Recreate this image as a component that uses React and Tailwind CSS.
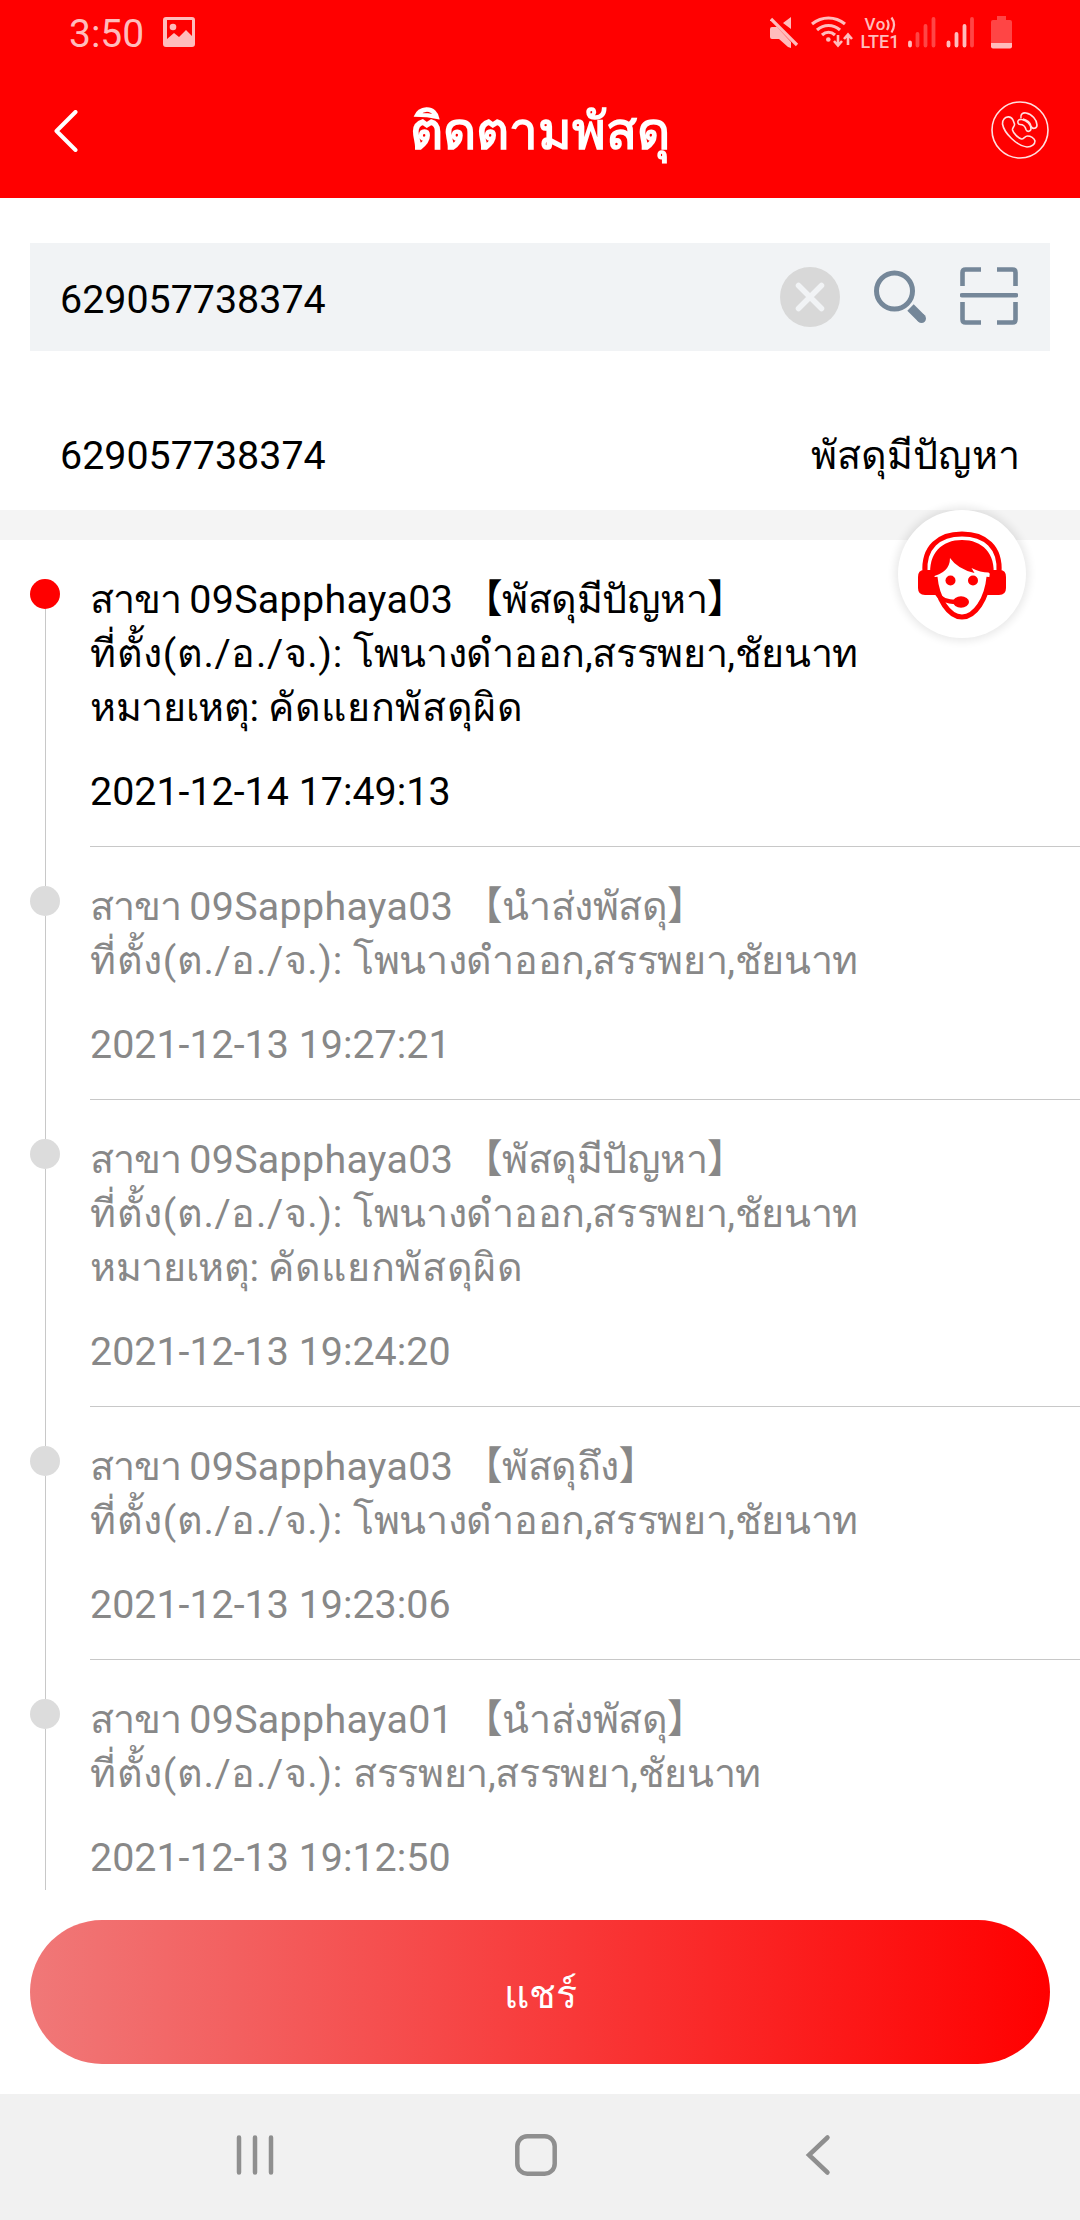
import clsx from "clsx";

// tracking history, newest first
const events = [
    {
        id: 1,
        active: true,
        branch: "09Sapphaya03",
        status: "พัสดุมีปัญหา",
        place: "โพนางดำออก,สรรพยา,ชัยนาท",
        remark: "คัดแยกพัสดุผิด",
        time: "2021-12-14 17:49:13",
    },
    {
        id: 2,
        branch: "09Sapphaya03",
        status: "นำส่งพัสดุ",
        place: "โพนางดำออก,สรรพยา,ชัยนาท",
        time: "2021-12-13 19:27:21",
    },
    {
        id: 3,
        branch: "09Sapphaya03",
        status: "พัสดุมีปัญหา",
        place: "โพนางดำออก,สรรพยา,ชัยนาท",
        remark: "คัดแยกพัสดุผิด",
        time: "2021-12-13 19:24:20",
    },
    {
        id: 4,
        branch: "09Sapphaya03",
        status: "พัสดุถึง",
        place: "โพนางดำออก,สรรพยา,ชัยนาท",
        time: "2021-12-13 19:23:06",
    },
    {
        id: 5,
        branch: "09Sapphaya01",
        status: "นำส่งพัสดุ",
        place: "สรรพยา,สรรพยา,ชัยนาท",
        time: "2021-12-13 19:12:50",
    },
];

function StatusBar() {
    return (
        <div className="flex h-[66px] items-center pl-[69px] text-[#ffbcbc]">
            <span className="w-[94px] pt-[2px] text-[39px] leading-none">3:50</span>
            <svg className="-mt-[3px] h-[30px] w-[32px]" viewBox="0 0 32 30" fill="currentColor">
                <path fillRule="evenodd" d="M3 0h26a3 3 0 0 1 3 3v24a3 3 0 0 1-3 3H3a3 3 0 0 1-3-3V3a3 3 0 0 1 3-3Zm1 3v19l7-6 5 4 7-7 6 6V3Z" />
                <circle cx="10" cy="10" r="3.3" />
            </svg>
            <svg className="mr-[66px] ml-auto h-[40px] w-[244px]" viewBox="770 12 244 40" fill="none" stroke="currentColor">
                {/* muted speaker */}
                <path d="M770 28q0-2 2-2h5l14 15v6l-3-1-9-8h-7q-2 0-2-2ZM783 22l8-6v12Z" fill="currentColor" stroke="none" />
                <path d="m771 18 26 26" strokeWidth="3.2" />
                {/* wifi with traffic arrows */}
                <path d="M812 23c10-8 23-8 33 0M817 29c7-6 16-6 23 0M822 34c4-3.500 9-3.500 13 0" strokeWidth="3.200" />
                <circle cx="828.300" cy="38.500" r="2.300" fill="currentColor" stroke="none" />
                <path d="M838 34v10m-4-4 4 4.500 4-4.500M848 44V33m-4 5 4-4.500 4 4.500" strokeWidth="2.600" />
                {/* volte */}
                <g fill="currentColor" stroke="none" fontFamily="Roboto" fontWeight="500">
                    <text x="864.500" y="29" fontSize="17" textLength="21">Vo</text>
                    <text x="860.500" y="46.500" fontSize="18" textLength="39">LTE1</text>
                </g>
                <path d="M887 19q3 4.500 0 10M891.500 16.500q5 7 0 15" strokeWidth="2.200" />
                {/* signal bars */}
                <g strokeWidth="3.800" strokeLinecap="round">
                    <path d="M910 41.500v3M948.500 41.500v3M956.500 33v11.500M964.500 25v19.500" />
                    <path d="M917.500 33v11.500M925.500 25v19.500M933.500 18v26.500M972 18v26.500" stroke="#ff4545" />
                </g>
                {/* battery */}
                <g stroke="none">
                    <path d="M997 15h9v4h4q2 0 2 2v21h-21V21q0-2 2-2h4Z" fill="#ff4545" />
                    <path d="M991 42h21v3.500q0 2-2 2h-17q-2 0-2-2Z" fill="currentColor" />
                </g>
            </svg>
        </div>
    );
}

function Header() {
    return (
        <div className="flex h-[132px] items-center justify-between pr-[31px] pl-[54px] text-white">
            <svg className="-mt-[2px] h-[42px] w-[35px]" viewBox="0 0 35 42" fill="none" stroke="currentColor" strokeWidth="4" strokeLinecap="round" strokeLinejoin="round">
                <path d="M21.500 2 2.500 21l19 19" />
            </svg>
            <h1 className="text-[51.2px] leading-[60px] font-bold">ติดตามพัสดุ</h1>
            <svg className="-mt-[4px] size-[58px]" viewBox="0 0 58 58" fill="none" stroke="#ffe0e0" strokeWidth="1.600" strokeLinejoin="round">
                <circle cx="29" cy="29" r="28" />
                <path d="M13 18c2-3 7-3 9 1l1.500 4c.500 2-2.500 4-2 6 1 3.500 5.500 8 9 9 2 .500 3.500-3 6-3 3 0 7 2 7.500 5 0 3-3 6-8 6-10-1-23-14-24.500-23 0-2 .500-4 1.500-5Z" />
                <path d="M27 22c-1-3 2-4 4-3.500 5 1 9 5 9 9 0 3-4 4-5 1-1-4-3-5-6-5q-1.500 0-2-1.500Z" />
                <path d="M30 17c-1-4 2-5.500 5-5 6 1 11 7 11 12 0 4-5 4.500-6 1-1-4-4-6-8-7" />
            </svg>
        </div>
    );
}

function SearchBox() {
    return (
        <div className="mx-[30px] mt-[45px] flex h-[108px] items-center bg-[#f1f3f5] pr-[32px] pl-[30px]">
            <span className="flex-1 pt-[5px]">629057738374</span>
            <svg className="size-[60px]" viewBox="0 0 60 60">
                <circle cx="30" cy="30" r="30" fill="#d8d8d8" />
                <path d="m18.500 18.500 23 23m0-23-23 23" stroke="#f1f3f5" strokeWidth="5.500" strokeLinecap="round" />
            </svg>
            <svg className="-mt-px ml-[34px] h-[54px] w-[53px]" viewBox="0 0 53 54" fill="none" stroke="#758799">
                <circle cx="20.500" cy="21" r="18" strokeWidth="5" />
                <path d="m36.500 37.500 11 11" strokeWidth="9" />
                <circle cx="47.500" cy="48.500" r="4.500" fill="#758799" stroke="none" />
            </svg>
            <svg className="-mt-[2px] ml-[33px] size-[58px]" viewBox="0 0 58 58" fill="none" stroke="#758799" strokeWidth="4.600">
                <path d="M2.500 19V5.500q0-3 3-3H21M37 2.500h15.500q3 0 3 3V19M55.500 35v17.500q0 3-3 3H37M21 55.500H5.500q-3 0-3-3V35" />
                <path d="M2 28.200h54" strokeLinecap="round" />
            </svg>
        </div>
    );
}

function TimelineItem({ event, last }) {
    const { active, branch, status, place, remark, time } = event;

    return (
        <li className="flex">
            {/* dot and the rail that joins it to the next one */}
            <div className="flex w-[90px] shrink-0 flex-col items-center">
                <div className={clsx("h-[39px] w-px", !active && "bg-[#c8c8c8]")} />
                <div className={clsx("size-[30px] rounded-full", active ? "bg-[#ff0000]" : "bg-[#dcdcdc]")} />
                <div className="w-px flex-1 bg-[#c8c8c8]" />
            </div>
            <div className={clsx("flex-1 pt-[33px] pb-[27px] leading-[54px] whitespace-nowrap", !last && "border-b border-[#c8c8c8]", active ? "text-black" : "text-[#888888]")}>
                <p className="h-[54px]">
                    <span className="tracking-[-1.1px]">สาขา </span>
                    <span className="tracking-[0.3px]">{branch} </span>
                    <span className="tracking-[-0.5px]">【{status}】</span>
                </p>
                <p className="h-[54px]">
                    <span className="tracking-[0.6px]">ที่ตั้ง(ต./อ./จ.): </span>
                    <span className="tracking-[-0.35px]">{place}</span>
                </p>
                {remark && (
                    <p className="h-[54px]">
                        <span className="tracking-[-0.35px]">หมายเหตุ: </span>
                        <span className="tracking-[0.65px]">{remark}</span>
                    </p>
                )}
                <p className="mt-[30px] h-[54px]">{time}</p>
            </div>
        </li>
    );
}

function SupportButton() {
    return (
        <button className="absolute top-[510px] left-[898px] flex size-[128px] items-center justify-center rounded-full bg-white shadow-[0_0_9px_3px_rgba(0,0,0,0.09)]">
            <svg className="mt-[4px] h-[90px] w-[88px]" viewBox="0 0 88 90" fill="none">
                <path d="M7 42C5 16 21 3 44 3s39 13 37 39" stroke="#ff0000" strokeWidth="5" />
                <path d="M17 46c2 22 14 40 27 40s25-18 27-40" stroke="#ff0000" strokeWidth="5" />
                <g fill="#ff0000">
                    <path d="M12.500 46C10 22 24 9 44 9s34 13 31.500 37l-5-4.500q-8 0-17-4.500l3 5q-17-4-24.500-15 0 15-19.500 19Z" />
                    <path d="M6 39h8q2 0 2 2l3 23H7q-7 0-7-7V46q0-7 6-7ZM82 39h-8q-2 0-2 2l-3 23h12q7 0 7-7V46q0-7-6-7Z" />
                    <circle cx="32.500" cy="49.500" r="5" />
                    <circle cx="55" cy="49.500" r="5" />
                    <ellipse cx="43" cy="71" rx="8" ry="5.700" />
                </g>
                <path d="M18 61c4 8 12 10 21 10" stroke="#ff0000" strokeWidth="4" />
            </svg>
        </button>
    );
}

function NavBar() {
    return (
        <div className="flex h-[126px] items-center bg-[#f1f1f1] pl-[235px] text-[#8f8f8f]">
            <svg className="-mt-[4px] h-[42px] w-[40px]" viewBox="0 0 40 42" stroke="currentColor" strokeWidth="4.500" strokeLinecap="round">
                <path d="M4 3.500v35M20 3.500v35M36 3.500v35" />
            </svg>
            <svg className="-mt-[4px] ml-[240px] size-[42px]" viewBox="0 0 42 42" fill="none" stroke="currentColor" strokeWidth="4.500">
                <rect x="2.300" y="2.300" width="37.400" height="37.400" rx="10" />
            </svg>
            <svg className="-mt-[4px] ml-[248px] h-[42px] w-[26px]" viewBox="0 0 26 42" fill="none" stroke="currentColor" strokeWidth="4.500" strokeLinecap="round">
                <path d="M22.500 3.500 4 21l18.500 17.500" />
            </svg>
        </div>
    );
}

export default function App() {
    return (
        <div className="relative flex h-[2220px] w-[1080px] flex-col overflow-hidden bg-white font-[Roboto,'Noto_Sans_CJK_SC',sans-serif] text-[39.4px] text-black">
            <div className="bg-[#ff0000]">
                <StatusBar />
                <Header />
            </div>
            <SearchBox />
            <div className="flex h-[159px] items-center justify-between px-[60px] pt-[51px]">
                <span>629057738374</span>
                <span>พัสดุมีปัญหา</span>
            </div>
            <div className="h-[30px] bg-[#f4f4f4]" />
            <ul className="h-[1350px] overflow-hidden">
                {events.map((event, i) => (
                    <TimelineItem key={event.id} event={event} last={i === events.length - 1} />
                ))}
            </ul>
            <div className="p-[30px]">
                <button className="block h-[144px] w-full rounded-full bg-linear-to-r/srgb from-[#f07878] to-[#ff0000] pt-[5px] text-white">แชร์</button>
            </div>
            <NavBar />
            <SupportButton />
        </div>
    );
}
